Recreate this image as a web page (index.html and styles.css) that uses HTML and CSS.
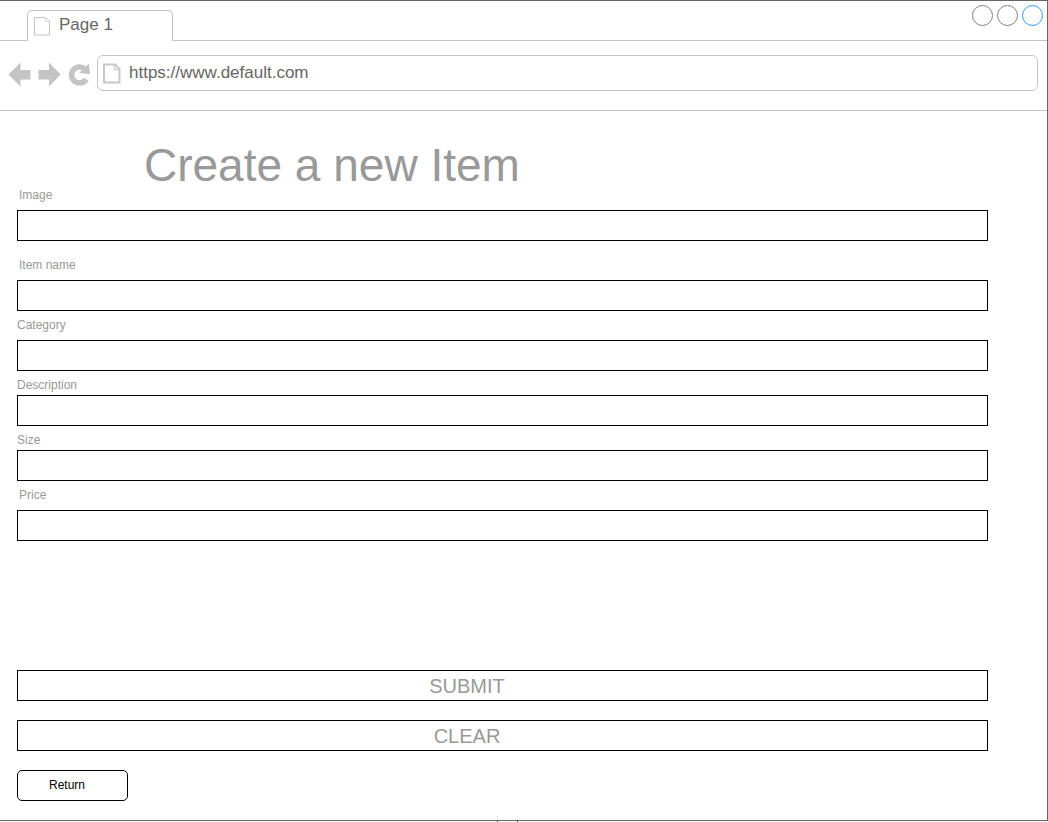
FILE: index.html
```html
<!DOCTYPE html>
<html lang="en">
<head>
<meta charset="utf-8">
<meta name="viewport" content="width=device-width, initial-scale=1">
<title>Create a new Item</title>
<link rel="stylesheet" href="styles.css">
</head>
<body>
<div class="window">
  <header class="tabs">
    <div class="tab">
      <svg class="tab-icon" width="17" height="20" viewBox="0 0 17 20" aria-hidden="true"><path d="M.5 1.500h11l4 4v13.500h-15z" fill="none" stroke="#c4c4c4"/><path d="M11.500 1.500v4h4" fill="none" stroke="#ddd"/></svg>
      <span>Page 1</span>
    </div>
    <div class="controls">
      <button class="dot" type="button" aria-label="Minimize"></button>
      <button class="dot" type="button" aria-label="Maximize"></button>
      <button class="dot dot-active" type="button" aria-label="Close"></button>
    </div>
  </header>
  <nav class="toolbar">
    <button class="tool" type="button" aria-label="Back"><svg width="23" height="25" viewBox="0 0 23 25"><path d="M.5 12.500 12.500 0.500v7.500H22.500v9.500H12.500V24.500z" fill="#c4c4c4"/></svg></button>
    <button class="tool" type="button" aria-label="Forward"><svg width="23" height="25" viewBox="0 0 23 25"><path d="M22.800 12.500 11 .5v7.500H.5v9.500H11V24.500z" fill="#c4c4c4"/></svg></button>
    <button class="tool" type="button" aria-label="Reload"><svg width="22" height="25" viewBox="0 0 22 25"><path d="M18.300 17.200A8 8 0 1 1 16.800 6.900" fill="none" stroke="#c4c4c4" stroke-width="5.500"/><path d="M21 1.800l1 10.200-11-1z" fill="#c4c4c4"/></svg></button>
    <div class="address">
      <svg width="18" height="21" viewBox="0 0 18 21" aria-hidden="true"><path d="M1 1.500h11l4.500 4.500v13.500H1z" fill="none" stroke="#c8c8c8" stroke-width="2"/><path d="M11.500 2v4.500h4.500" fill="none" stroke="#c8c8c8"/></svg>
      <input class="url" type="text" value="https://www.default.com" aria-label="Address">
    </div>
  </nav>
  <main class="page">
    <h1 class="title">Create a new Item</h1>
    <form class="form">
      <div class="field field-spaced">
        <label class="label label-indent" for="image">Image</label>
        <input class="box" id="image" type="text">
      </div>
      <div class="field">
        <label class="label label-indent" for="name">Item name</label>
        <input class="box" id="name" type="text">
      </div>
      <div class="field">
        <label class="label" for="category">Category</label>
        <input class="box" id="category" type="text">
      </div>
      <div class="field field-tight">
        <label class="label" for="description">Description</label>
        <input class="box" id="description" type="text">
      </div>
      <div class="field field-tight">
        <label class="label" for="size">Size</label>
        <input class="box" id="size" type="text">
      </div>
      <div class="field">
        <label class="label label-indent" for="price">Price</label>
        <input class="box" id="price" type="text">
      </div>
      <div class="actions">
        <button class="box action" type="submit">SUBMIT</button>
        <button class="box action" type="reset">CLEAR</button>
        <button class="box return" type="button">Return</button>
      </div>
    </form>
  </main>
</div>
<div class="ticks"><span class="tick"></span><span class="tick"></span></div>
</body>
</html>
```
FILE: styles.css
```css
* {
  box-sizing: border-box;
}

body {
  margin: 0;
  background: #fff;
  font-family: "Liberation Sans", Arial, sans-serif;
}

button,
input {
  margin: 0;
  font-family: inherit;
}

svg {
  display: block;
}

.window {
  border: 1px solid #666;
  border-left: 0;
}

.tabs {
  display: flex;
  justify-content: space-between;
  align-items: flex-start;
  height: 40px;
  padding: 0 4px 0 27px;
  border-bottom: 1px solid #c4c4c4;
}

.tab {
  display: flex;
  gap: 8px;
  width: 146px;
  height: 31px;
  margin-top: 9px;
  padding: 4px 6px;
  border: 1px solid #c4c4c4;
  border-bottom: 0;
  border-radius: 5px 5px 0 0;
  background: #fff;
  color: #666;
  font-size: 17px;
  line-height: 20px;
}

.tab-icon {
  margin-top: 1px;
}

.controls {
  display: flex;
  gap: 4px;
  padding-top: 4px;
}

.dot {
  width: 21px;
  height: 21px;
  padding: 0;
  border: 1px solid #808080;
  border-radius: 50%;
  background: #fff;
}

.dot-active {
  border-color: #3399ff;
}

.toolbar {
  display: flex;
  align-items: center;
  gap: 7px;
  padding: 14px 9px 19px 8px;
  border-bottom: 1px solid #c4c4c4;
}

.tool {
  padding: 2px 0 0;
  border: 0;
  background: none;
}

.address {
  display: flex;
  flex: 1;
  align-items: center;
  gap: 8px;
  height: 36px;
  padding: 0 5px;
  border: 1px solid #c4c4c4;
  border-radius: 6px;
}

.url {
  flex: 1;
  min-width: 0;
  height: 32px;
  padding: 0;
  border: 0;
  outline: 0;
  background: none;
  color: #666;
  font-size: 17px;
}

.page {
  padding: 31px 59px 19px 17px;
}

.title {
  margin: 0;
  padding-left: 127px;
  color: #999;
  font-size: 46px;
  font-weight: 400;
  line-height: 46px;
}

.form {
  display: flex;
  flex-direction: column;
  gap: 7px;
}

.field {
  display: flex;
  flex-direction: column;
  align-items: flex-start;
  gap: 8px;
}

.field-spaced {
  margin-bottom: 10px;
}

.field-tight {
  gap: 3px;
}

.label {
  color: #999;
  font-size: 12px;
  line-height: 14px;
}

.label-indent {
  padding-left: 2px;
}

.box {
  width: 100%;
  height: 31px;
  border: 1px solid #000;
  border-radius: 0;
  background: #fff;
}

.actions {
  display: flex;
  flex-direction: column;
  gap: 19px;
  margin-top: 122px;
}

.action {
  padding: 2px 71px 0 0;
  color: #999;
  font-size: 20px;
}

.return {
  width: 111px;
  padding: 0 11px 2px 0;
  border-radius: 5px;
  color: #000;
  font-size: 12px;
}

.ticks {
  display: flex;
  justify-content: center;
  gap: 19px;
  padding-right: 33px;
}

.tick {
  width: 1px;
  height: 1px;
  background: #333;
}
```
